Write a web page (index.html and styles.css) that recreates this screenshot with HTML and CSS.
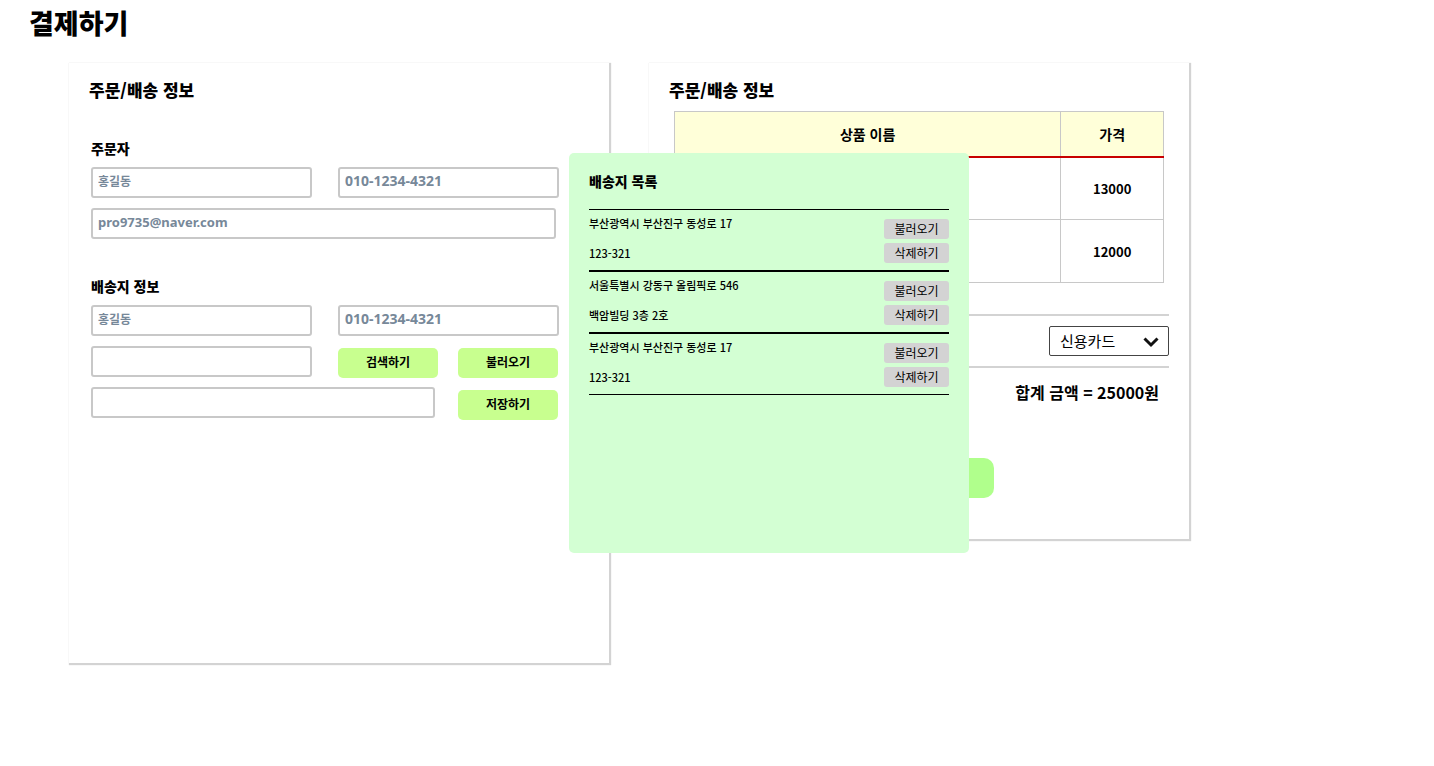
FILE: index.html
```html
<!DOCTYPE html>
<html lang="ko">
<head>
<meta charset="utf-8">
<meta name="viewport" content="width=device-width, initial-scale=1">
<title>결제하기</title>
<link rel="stylesheet" href="styles.css">
</head>
<body>
<h1 class="page-title">결제하기</h1>
<main class="checkout">
  <form class="panel order">
    <h2 class="panel-title">주문/배송 정보</h2>
    <section class="group">
      <h3 class="group-title">주문자</h3>
      <div class="row">
        <input class="field" type="text" placeholder="홍길동" aria-label="주문자 이름">
        <input class="field latin" type="tel" placeholder="010-1234-4321" aria-label="주문자 전화번호">
      </div>
      <input class="field latin email" type="email" placeholder="pro9735@naver.com" aria-label="이메일">
    </section>
    <section class="group">
      <h3 class="group-title">배송지 정보</h3>
      <div class="row">
        <input class="field" type="text" placeholder="홍길동" aria-label="받는 사람">
        <input class="field latin" type="tel" placeholder="010-1234-4321" aria-label="받는 사람 전화번호">
      </div>
      <div class="row">
        <input class="field" type="text" aria-label="우편번호">
        <div class="actions">
          <button class="btn" type="button">검색하기</button>
          <button class="btn" type="button">불러오기</button>
        </div>
      </div>
      <div class="detail">
        <input class="field" type="text" aria-label="상세 주소">
        <button class="btn" type="button">저장하기</button>
      </div>
    </section>
  </form>

  <section class="panel payment">
    <h2 class="panel-title">주문/배송 정보</h2>
    <table class="items">
      <thead><tr><th class="name" scope="col">상품 이름</th><th scope="col">가격</th></tr></thead>
      <tbody>
        <tr><td></td><td>13000</td></tr>
        <tr><td></td><td>12000</td></tr>
      </tbody>
    </table>
    <div class="method">
      <div class="select-wrap">
        <select class="select" aria-label="결제 수단"><option>신용카드</option></select>
        <svg class="chevron" viewBox="0 0 16 12" aria-hidden="true"><path d="M1.500 2.500 8 9l6.500-6.500"/></svg>
      </div>
    </div>
    <p class="total">합계 금액 = 25000원</p>
    <button class="pay" type="button">결제하기</button>
  </section>

  <div class="modal" role="dialog" aria-labelledby="modal-title">
    <h3 class="modal-title" id="modal-title">배송지 목록</h3>
    <ul class="addresses">
      <li class="address">
        <div class="lines"><p>부산광역시 부산진구 동성로 17</p><p>123-321</p></div>
        <div class="tools"><button class="mini" type="button">불러오기</button><button class="mini" type="button">삭제하기</button></div>
      </li>
      <li class="address">
        <div class="lines"><p>서울특별시 강동구 올림픽로 546</p><p>백암빌딩 3층 2호</p></div>
        <div class="tools"><button class="mini" type="button">불러오기</button><button class="mini" type="button">삭제하기</button></div>
      </li>
      <li class="address">
        <div class="lines"><p>부산광역시 부산진구 동성로 17</p><p>123-321</p></div>
        <div class="tools"><button class="mini" type="button">불러오기</button><button class="mini" type="button">삭제하기</button></div>
      </li>
    </ul>
  </div>
</main>
</body>
</html>
```

FILE: styles.css
```css
* { box-sizing: border-box; }

body {
  margin: 0;
  background: #fff;
  color: #000;
  font-family: "Noto Sans CJK KR", sans-serif;
  font-size: 14px;
}

h1, h2, h3, p, ul { margin: 0; padding: 0; }
button, input, select { font-family: inherit; color: inherit; }

.page-title {
  padding: 3px 29px 0;
  font-size: 27px;
  font-weight: 900;
  line-height: 40px;
}

.checkout {
  position: relative;
  display: flex;
  align-items: flex-start;
  gap: 40px;
  padding: 20px 69px;
}

.panel {
  flex: 0 1 540px;
  padding: 15px 20px 0;
  box-shadow: 1px 1px 1px 1px #d3d3d3;
}

.panel-title {
  font-size: 17px;
  font-weight: 900;
  line-height: 24px;
}

.order { min-height: 600px; padding-right: 50px; }

.group {
  display: grid;
  gap: 10px;
  padding-left: 2px;
  margin-top: 36px;
}

.group + .group { margin-top: 37px; }

.group-title {
  font-size: 14px;
  font-weight: 900;
  line-height: 20px;
  margin-bottom: -1px;
}

.row {
  display: grid;
  grid-template-columns: 1fr 1fr;
  gap: 26px;
}

.field {
  width: 100%;
  height: 31px;
  padding: 0 5px 4px;
  border: 2px solid #c8c8c8;
  border-radius: 3px;
  background: #fff;
  font-size: 12px;
}

.field::placeholder { color: #778899; font-weight: 700; opacity: 1; }
.latin { font-family: "Noto Sans", sans-serif; font-size: 14px; }
.email { width: calc(100% - 3px); font-size: 13px; }

.actions {
  display: flex;
  align-items: flex-start;
  gap: 20px;
  height: 31px;
  padding-top: 2px;
}

.btn {
  width: 100px;
  height: 30px;
  padding: 0 0 3px;
  border: 0;
  border-radius: 5px;
  background: #c8ff8f;
  font-size: 12px;
  font-weight: 700;
}

.detail { display: flex; align-items: flex-start; gap: 23px; }
.detail .field { flex: 1; }
.detail .btn { margin: 3px 1px 0 0; }

.payment { min-height: 476px; }

.items {
  width: calc(100% - 10px);
  margin: 9px 5px 0;
  border-collapse: collapse;
  text-align: center;
  font-weight: 700;
}

.items th, .items td { height: 63px; padding: 0; border: 1px solid #c8c8c8; }
.items td { font-size: 13px; }
.items th { height: 45px; background: #ffffd9; border-bottom: 2px solid #c80000; }
.items .name { width: 79%; }

.method {
  display: flex;
  justify-content: flex-end;
  margin-top: 31px;
  padding: 10px 0;
  border-top: 2px solid #d3d3d3;
  border-bottom: 2px solid #d3d3d3;
}

.select-wrap { position: relative; width: 120px; }

.select {
  display: block;
  width: 100%;
  height: 30px;
  padding: 0 10px 2px;
  border: 1px solid #444;
  border-radius: 2px;
  background: #fff;
  font-size: 15px;
  appearance: none;
}

.chevron {
  position: absolute;
  top: 10px;
  right: 10px;
  width: 16px;
  height: 12px;
  fill: none;
  stroke: #111;
  stroke-width: 3;
  pointer-events: none;
}

.total {
  padding: 12px 10px 0;
  text-align: right;
  font-size: 16px;
  font-weight: 700;
  line-height: 24px;
}

.pay {
  display: block;
  width: 150px;
  height: 40px;
  margin: 54px auto 0;
  border: 0;
  border-radius: 10px;
  background: #b0ff8c;
  font-size: 14px;
}

.modal {
  position: absolute;
  top: 110px;
  left: 569px;
  width: 400px;
  min-height: 400px;
  padding: 20px;
  border-radius: 5px;
  background: #d3ffd3;
}

.modal-title {
  margin-bottom: 20px;
  font-size: 14px;
  font-weight: 900;
  line-height: 16px;
}

.addresses { list-style: none; }

.address {
  display: flex;
  justify-content: space-between;
  height: 62px;
  border-top: 1px solid #000;
  border-bottom: 1px solid #000;
}

.lines { font-size: 11px; font-weight: 500; line-height: 26px; }
.lines p + p { margin-top: 4px; }

.tools { display: grid; align-content: start; gap: 4px; padding-top: 9px; }

.mini {
  width: 65px;
  height: 20px;
  padding: 0 0 1px;
  border: 0;
  border-radius: 3px;
  background: #d3d3d3;
  font-size: 12px;
  line-height: 18px;
}
```
